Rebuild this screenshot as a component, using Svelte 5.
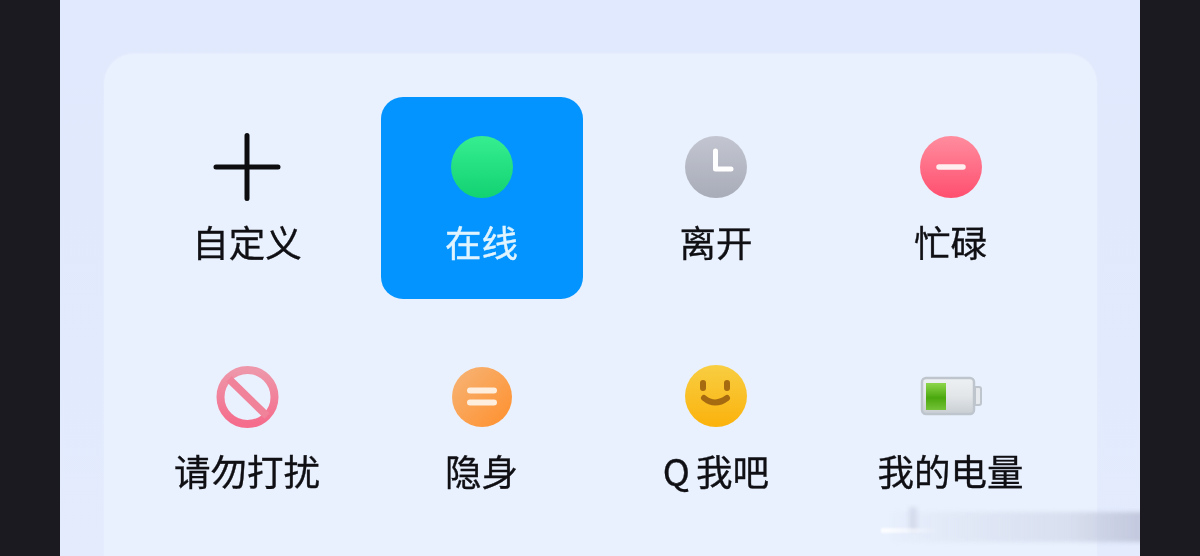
<script>
  const items = [
    { id: 'plus', label: '自定义' },
    { id: 'online', label: '在线', active: true },
    { id: 'away', label: '离开' },
    { id: 'busy', label: '忙碌' },
    { id: 'dnd', label: '请勿打扰' },
    { id: 'hidden', label: '隐身' },
    { id: 'q', label: 'Q 我吧' },
    { id: 'battery', label: '我的电量' }
  ];
</script>

<div class="screen">
  <main class="phone">
    <section class="card">
      <div class="grid">
        {#each items as item}
          <div class="cell" class:active={item.active}>
            <svg class="icon" viewBox="0 0 70 70" width="70" height="70" aria-hidden="true">
              <defs>
                <linearGradient id="g-{item.id}" x1="0" y1="0" x2={item.id === 'hidden' ? 1 : 0} y2="1">
                  {#if item.id === 'online'}
                    <stop offset="0" stop-color="#36ee90" /><stop offset="1" stop-color="#12d272" />
                  {:else if item.id === 'away'}
                    <stop offset="0" stop-color="#c3c6d1" /><stop offset="1" stop-color="#a8acb8" />
                  {:else if item.id === 'busy'}
                    <stop offset="0" stop-color="#ff8d9e" /><stop offset="1" stop-color="#ff4f6f" />
                  {:else if item.id === 'dnd'}
                    <stop offset="0" stop-color="#ee97aa" /><stop offset="1" stop-color="#f56c8c" />
                  {:else if item.id === 'hidden'}
                    <stop offset="0" stop-color="#f6b578" /><stop offset="1" stop-color="#ff8f2c" />
                  {:else if item.id === 'q'}
                    <stop offset="0" stop-color="#f8ce42" /><stop offset="1" stop-color="#fbb20c" />
                  {:else if item.id === 'battery'}
                    <stop offset="0" stop-color="#8ed64c" /><stop offset=".55" stop-color="#4ba80e" /><stop offset="1" stop-color="#74c238" />
                  {/if}
                </linearGradient>
                {#if item.id === 'battery'}
                  <linearGradient id="g-body" x1="0" y1="0" x2="0" y2="1">
                    <stop offset="0" stop-color="#eef1f3" /><stop offset=".5" stop-color="#e2e6e9" /><stop offset="1" stop-color="#c9ced4" />
                  </linearGradient>
                {/if}
              </defs>
              {#if item.id === 'plus'}
                <path d="M35 3.5V66.5M4 35H66" fill="none" stroke="#0d0d10" stroke-width="5" stroke-linecap="round" />
              {:else if item.id === 'online'}
                <circle cx="35" cy="35" r="31" fill="url(#g-online)" />
              {:else if item.id === 'away'}
                <circle cx="35" cy="35" r="31" fill="url(#g-away)" />
                <path d="M34.5 19V37H50" fill="none" stroke="#fff" stroke-width="5" stroke-linecap="round" stroke-linejoin="round" />
              {:else if item.id === 'busy'}
                <circle cx="35" cy="35" r="31" fill="url(#g-busy)" />
                <path d="M23 35H47" fill="none" stroke="#ffeef0" stroke-width="5.5" stroke-linecap="round" />
              {:else if item.id === 'dnd'}
                <circle cx="35.5" cy="36" r="27" fill="none" stroke="url(#g-dnd)" stroke-width="8" />
                <path d="M17 18L55 55" fill="none" stroke="#f0829a" stroke-width="7.5" />
              {:else if item.id === 'hidden'}
                <circle cx="35" cy="36" r="30" fill="url(#g-hidden)" />
                <path d="M23 29.5H47M23 41.5H47" fill="none" stroke="#fdeede" stroke-width="6" stroke-linecap="round" />
              {:else if item.id === 'q'}
                <circle cx="35" cy="35" r="31" fill="url(#g-q)" />
                <path d="M22 22V27M46 22V27" fill="none" stroke="#a66a10" stroke-width="6" stroke-linecap="round" />
                <path d="M23 37Q34 46 46 37" fill="none" stroke="#a66a10" stroke-width="6" stroke-linecap="round" />
              {:else if item.id === 'battery'}
                <rect x="6" y="17" width="52" height="36" rx="4" fill="url(#g-body)" stroke="#bfc5cd" stroke-width="2.5" />
                <path d="M59 26H63Q65 26 65 28V42Q65 44 63 44H59Z" fill="#e6eaee" stroke="#bfc5cd" stroke-width="2" />
                <rect x="10" y="22" width="20" height="27" fill="url(#g-battery)" />
              {/if}
            </svg>
            <span class="label">{item.label}</span>
          </div>
        {/each}
      </div>
    </section>
  </main>
  <div class="watermark" aria-hidden="true">
    <div class="wm-bar"></div>
    <div class="wm-stem"></div>
    <div class="wm-line"></div>
  </div>
</div>

<style>
  :global(body) {
    margin: 0;
    background: #1a1a20;
  }

  .screen {
    position: relative;
    width: 1200px;
    height: 556px;
    overflow: hidden;
    padding: 0 60px;
    box-sizing: border-box;
    background: #1a1a20;
    font-family: "Noto Sans CJK SC", "Noto Sans", sans-serif;
  }

  .phone {
    height: 100%;
    padding: 54px 43px 0 44px;
    box-sizing: border-box;
    background: linear-gradient(180deg, #e0e9fd 0%, #e3ebfd 100%);
  }

  .card {
    height: 100%;
    padding: 43px 42px 0;
    box-sizing: border-box;
    background: #e9f1fe;
    border-radius: 30px 30px 0 0;
    box-shadow: 0 -1px 2px #e9eefe;
  }

  .grid {
    display: grid;
    grid-template-columns: repeat(4, 202px);
    grid-auto-rows: 202px;
    column-gap: 32.5px;
    row-gap: 27px;
  }

  .cell {
    display: flex;
    flex-direction: column;
    align-items: center;
    padding-top: 35px;
    box-sizing: border-box;
    border-radius: 22px;
    color: #101014;
  }

  .cell.active {
    background: #0494ff;
    color: #dff4ff;
  }

  .icon {
    display: block;
    flex: none;
    filter: blur(0.6px);
  }

  .label {
    margin-top: 18px;
    font-size: 36.5px;
    line-height: 44px;
    white-space: nowrap;
    word-spacing: -2px;
    -webkit-text-stroke: 0.35px currentColor;
    filter: blur(0.4px);
  }

  .watermark {
    position: absolute;
    left: 880px;
    top: 504px;
    width: 260px;
    height: 44px;
    overflow: hidden;
  }

  .wm-bar {
    position: absolute;
    left: 10px;
    right: -4px;
    top: 8px;
    height: 30px;
    background: linear-gradient(90deg, rgba(198, 204, 222, 0.03), rgba(196, 201, 220, 0.22) 30%, rgba(190, 195, 216, 0.38) 70%, rgba(184, 188, 210, 0.75) 100%);
    filter: blur(2px);
  }

  .wm-stem {
    position: absolute;
    left: 29px;
    top: 3px;
    width: 8px;
    height: 24px;
    background: rgba(190, 196, 214, 0.4);
    filter: blur(2px);
  }

  .wm-line {
    position: absolute;
    left: 1px;
    top: 24px;
    width: 60px;
    height: 5px;
    background: linear-gradient(90deg, rgba(255, 255, 255, 0.9), rgba(255, 255, 255, 0));
    filter: blur(1px);
  }
</style>
